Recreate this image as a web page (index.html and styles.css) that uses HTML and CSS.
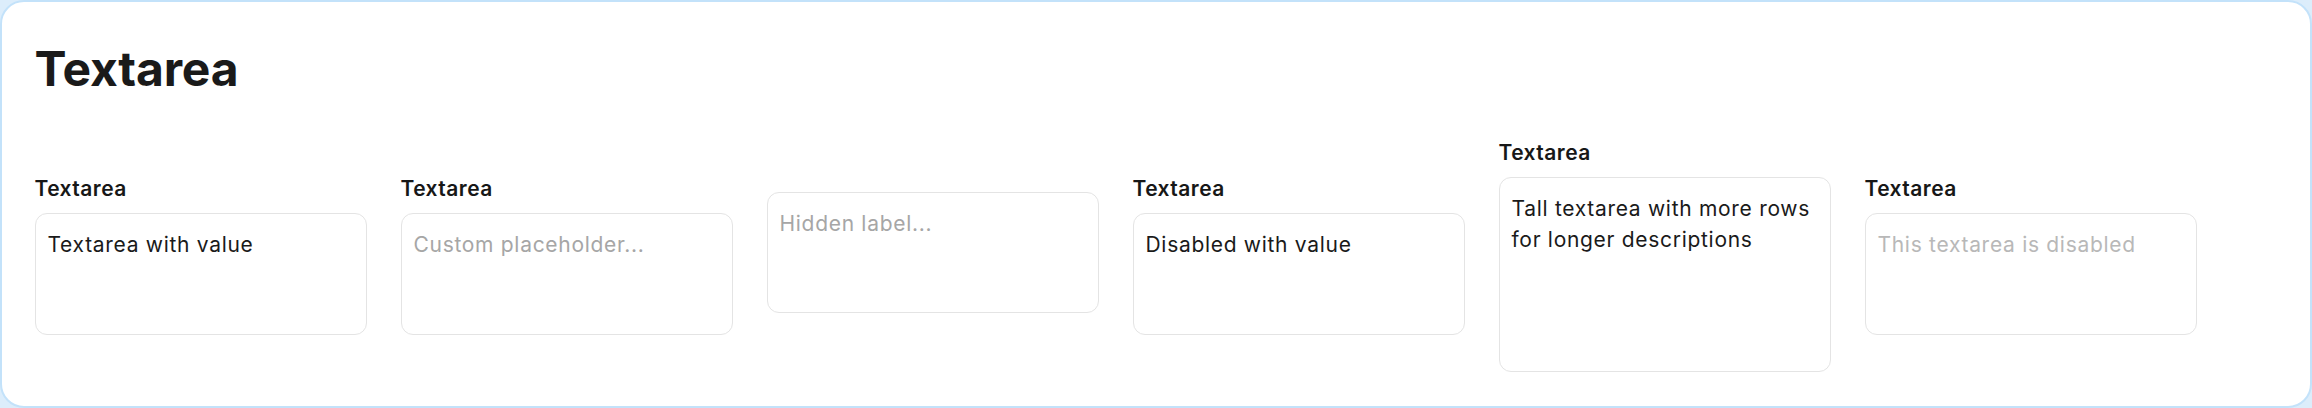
FILE: index.html
```html
<!DOCTYPE html>
<html lang="en">
<head>
<meta charset="utf-8">
<title>Textarea</title>
<link rel="stylesheet" href="styles.css">
</head>
<body>
<section class="card">
  <h1 class="title">Textarea</h1>
  <div class="row">
    <div class="field">
      <label class="label" for="t1">Textarea</label>
      <textarea id="t1" class="ta" rows="3">Textarea with value</textarea>
    </div>
    <div class="field">
      <label class="label" for="t2">Textarea</label>
      <textarea id="t2" class="ta" rows="3" placeholder="Custom placeholder..."></textarea>
    </div>
    <div class="field">
      <textarea id="t3" class="ta ta-hidden" rows="3" aria-label="Textarea" placeholder="Hidden label..."></textarea>
    </div>
    <div class="field">
      <label class="label" for="t4">Textarea</label>
      <textarea id="t4" class="ta" rows="3" disabled>Disabled with value</textarea>
    </div>
    <div class="field">
      <label class="label" for="t5">Textarea</label>
      <textarea id="t5" class="ta ta-tall" rows="5">Tall textarea with more rows for longer descriptions</textarea>
    </div>
    <div class="field">
      <label class="label" for="t6">Textarea</label>
      <textarea id="t6" class="ta ta-disabled" rows="3" disabled placeholder="This textarea is disabled"></textarea>
    </div>
  </div>
</section>
</body>
</html>
```
FILE: styles.css
```css
html, body {
  margin: 0;
  padding: 0;
  background: #dcedfb;
}

body {
  font-family: Inter, "Noto Sans", "Liberation Sans", sans-serif;
  color: #171717;
}

.card {
  box-sizing: border-box;
  width: 2312px;
  height: 408px;
  background: #ffffff;
  border: 2px solid #c3e2fa;
  border-radius: 24px;
  padding: 38px 32px 0 32.5px;
}

.title {
  margin: 0;
  font-size: 48px;
  line-height: 57.6px;
  font-weight: 700;
  color: #1a1a1a;
  letter-spacing: -0.2px;
}

.row {
  display: flex;
  align-items: center;
  gap: 34px;
  margin-top: 36px;
}

.field {
  display: flex;
  flex-direction: column;
  width: 332px;
}

.label {
  font-size: 21px;
  line-height: 31.5px;
  font-weight: 600;
  letter-spacing: 0.45px;
  color: #171717;
  padding-top: 3px;
  margin-bottom: 8.5px;
}

.ta {
  box-sizing: border-box;
  display: block;
  width: 332px;
  height: 122px;
  margin: 0;
  padding: 15px 12px 9px 12px;
  border: 1.5px solid #e4e4e4;
  border-radius: 12px;
  background: #ffffff;
  font-family: Inter, "Noto Sans", "Liberation Sans", sans-serif;
  font-size: 21px;
  line-height: 31.5px;
  letter-spacing: 0.7px;
  color: #1a1a1a;
  resize: none;
  outline: none;
  overflow: hidden;
}

.ta::placeholder {
  color: #a6a6a6;
  opacity: 1;
}

.ta:disabled {
  background: #ffffff;
  color: #1a1a1a;
  -webkit-text-fill-color: #1a1a1a;
  opacity: 1;
}

.ta-disabled:disabled::placeholder {
  color: #b8b8b8;
  -webkit-text-fill-color: #b8b8b8;
}

.ta-hidden {
  height: 121px;
}

.ta-tall {
  height: 195px;
}
```
